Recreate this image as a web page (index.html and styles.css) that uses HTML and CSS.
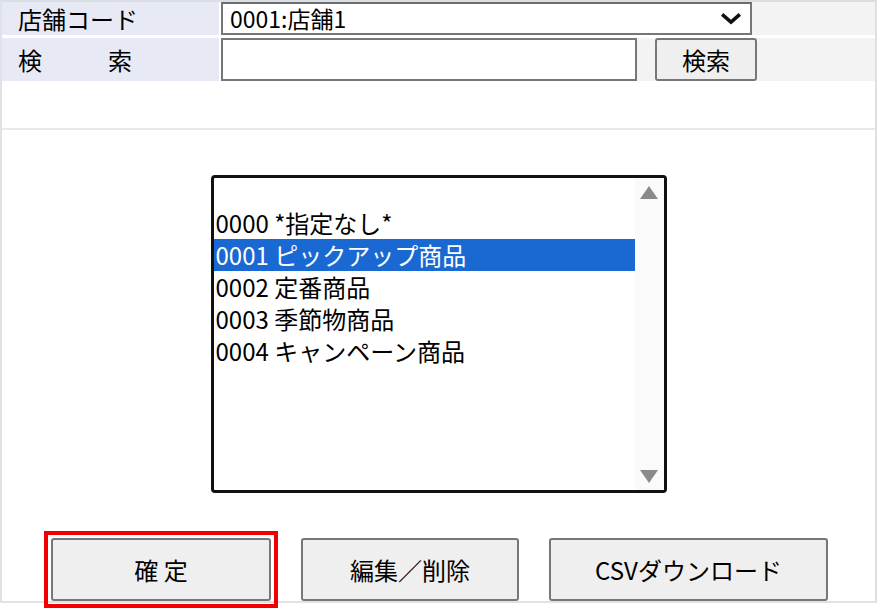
FILE: index.html
```html
<!DOCTYPE html>
<html lang="ja">
<head>
<meta charset="utf-8">
<title>商品分類選択</title>
<link rel="stylesheet" href="styles.css">
</head>
<body>
<div class="frame">
  <div class="form">
    <div class="row row-store">
      <div class="label">店舗コード</div>
      <div class="value">
        <div class="select">
          <span class="select-text">0001:店舗1</span>
          <svg class="chevron" width="20" height="12" viewBox="0 0 20 12"><path d="M2.5 2.5 L10 9 L17.5 2.5" fill="none" stroke="#111" stroke-width="3.6" stroke-linecap="square"/></svg>
        </div>
      </div>
    </div>
    <div class="row row-search">
      <div class="label label-spaced">検　　索</div>
      <div class="value">
        <div class="input"></div>
        <div class="btn btn-search">検索</div>
      </div>
    </div>
  </div>
  <div class="spacer"></div>
  <div class="content">
    <div class="listbox">
      <div class="options">
        <div class="option">0000 *指定なし*</div>
        <div class="option selected">0001 ピックアップ商品</div>
        <div class="option">0002 定番商品</div>
        <div class="option">0003 季節物商品</div>
        <div class="option">0004 キャンペーン商品</div>
      </div>
      <div class="scrollbar">
        <svg class="arrow" width="18" height="13" viewBox="0 0 18 13"><path d="M9 0 L18 13 L0 13 Z" fill="#8a8a8a"/></svg>
        <svg class="arrow" width="18" height="13" viewBox="0 0 18 13"><path d="M0 0 L18 0 L9 13 Z" fill="#8a8a8a"/></svg>
      </div>
    </div>
    <div class="actions">
      <div class="highlight"><div class="btn btn-confirm">確 定</div></div>
      <div class="btn btn-edit">編集／削除</div>
      <div class="btn btn-csv">CSVダウンロード</div>
    </div>
  </div>
</div>
</body>
</html>
```

FILE: styles.css
```css
html, body {
  margin: 0;
  padding: 0;
  background: #ffffff;
}
html { height: 609px; }
body {
  min-height: 609px;
  font-family: "Noto Sans CJK JP", "Noto Sans", sans-serif;
  font-size: 24px;
  color: #000;
}
.frame {
  width: 877px;
  height: 603px;
  box-sizing: border-box;
  border-top: 2px solid #d9dde4;
  border-left: 2px solid #dfe2e9;
  border-right: 2px solid #e0e0e0;
  border-bottom: 2px solid #e2e2e2;
  display: flex;
  flex-direction: column;
}
.form {
  display: flex;
  flex-direction: column;
  gap: 3px;
}
.row {
  display: flex;
  gap: 2px;
}
.row-store { height: 33px; }
.row-search { height: 43px; }
.label {
  width: 217px;
  background: #e7e9f5;
  padding-left: 16px;
  box-sizing: border-box;
  display: flex;
  align-items: center;
  line-height: 1;
  white-space: pre;
}
.label-spaced {
  letter-spacing: 6px;
}
.value {
  flex: 1;
  background: #f3f3f3;
  display: flex;
  align-items: stretch;
}
.select {
  width: 531px;
  box-sizing: border-box;
  border: 2px solid #777;
  border-top-color: #6d6d6d;
  background: #fff;
  display: flex;
  align-items: center;
  justify-content: space-between;
  padding: 0 9px 0 7px;
  line-height: 1;
}
.select-text {
  font-size: 23px;
}
.chevron { display: block; }
.input {
  width: 416px;
  box-sizing: border-box;
  border: 2px solid #777;
  background: #fff;
}
.btn {
  box-sizing: border-box;
  border: 2px solid #777;
  border-radius: 3px;
  background: #efefef;
  display: flex;
  align-items: center;
  justify-content: center;
  line-height: 1;
  white-space: pre;
}
.btn-search {
  width: 102px;
  margin-left: 18px;
}
.spacer {
  height: 47px;
  border-bottom: 2px solid #e9e9e9;
}
.content {
  flex: 1;
  display: flex;
  flex-direction: column;
  align-items: center;
  padding-top: 45px;
  justify-content: space-between;
}
.listbox {
  width: 456px;
  height: 318px;
  box-sizing: border-box;
  border: 3px solid #111;
  border-radius: 4px;
  display: flex;
  background: #fff;
}
.options {
  width: 421px;
  padding-top: 29px;
}
.option {
  height: 32px;
  line-height: 32px;
  padding-left: 2px;
  white-space: pre;
}
.option.selected {
  background: #1a69d2;
  color: #fff;
}
.scrollbar {
  flex: 1;
  background: #fafafa;
  display: flex;
  flex-direction: column;
  justify-content: space-between;
  align-items: center;
  padding: 8px 0 7px;
}
.arrow { display: block; }
.actions {
  align-self: stretch;
  display: flex;
  gap: 30px;
  padding-left: 49px;
  height: 63px;
}
.actions .btn { height: 63px; }
.highlight {
  position: relative;
}
.highlight::after {
  content: "";
  position: absolute;
  left: -7px;
  top: -7px;
  right: -7px;
  bottom: -7px;
  border: 4px solid #f00000;
  pointer-events: none;
}
.btn-confirm { width: 220px; }
.btn-edit { width: 218px; }
.btn-csv { width: 279px; }
```
